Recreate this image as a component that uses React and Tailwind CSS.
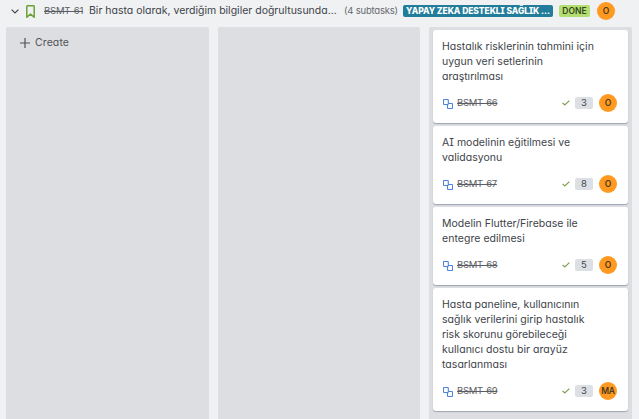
const cards = [
  { id: 'BSMT-66', points: 3, who: 'O', lines: [['Hastalık risklerinin tahmini için', 'tracking-[0.02px]'], ['uygun veri setlerinin', 'tracking-[0.02px]'], ['araştırılması', 'tracking-[0px]']] },
  { id: 'BSMT-67', points: 8, who: 'O', lines: [['AI modelinin eğitilmesi ve', 'tracking-[0.02px]'], ['validasyonu', 'tracking-[0.02px]']] },
  { id: 'BSMT-68', points: 5, who: 'O', lines: [['Modelin Flutter/Firebase ile', 'tracking-[0.03px]'], ['entegre edilmesi', 'tracking-[0.04px]']] },
  { id: 'BSMT-69', points: 3, who: 'MA', lines: [['Hasta paneline, kullanıcının', 'tracking-[0.02px]'], ['sağlık verilerini girip hastalık', 'tracking-[0.03px]'], ['risk skorunu görebileceği', 'tracking-[-0.02px]'], ['kullanıcı dostu bir arayüz', 'tracking-[0.03px]'], ['tasarlanması', 'tracking-[0.03px]']] },
];

function Avatar({ children }) {
  return (
    <span className="flex size-[18px] shrink-0 items-center justify-center rounded-full bg-[#ff991f] text-[8.5px] font-semibold leading-none tracking-[-0.2px] text-[#4a3a22]">
      {children}
    </span>
  );
}

function Card({ card }) {
  return (
    <article className="rounded-[3px] bg-white px-[9px] pt-[9px] pb-[11px] shadow-[0_1px_1px_rgba(9,30,66,0.3)]">
      <p className="text-[10.5px] leading-[15px] text-[#404349]">
        {card.lines.map(([text, tracking]) => (
          <span key={text} className="block whitespace-nowrap">
            <span className={tracking}>{text}</span>
          </span>
        ))}
      </p>
      <div className="mt-[10px] flex h-[18px] items-center">
        <svg className="mt-[2px] ml-px size-[10px] shrink-0" viewBox="0 0 10 10" fill="none" stroke="#4c83dd" strokeWidth="1.1">
          <rect x="0.5" y="0.5" width="4.8" height="5" rx="0.7" />
          <path d="M5.300 4.500h3.500q.7 0 .7.7v3.600q0 .7-.7.7H5.200q-.7 0-.7-.7V5.500" />
        </svg>
        <span className="ml-[4px] text-[9.5px] tracking-[-0.3px] text-[#5b5e64] line-through">{card.id}</span>
        <svg className="ml-auto h-[6px] w-2 shrink-0" viewBox="0 0 8 6" fill="none" stroke="#7f9f50" strokeWidth="1.2">
          <path d="M.6 2.8 2.8 5 7.4.6" />
        </svg>
        <span className="ml-[5px] mr-[6px] flex h-3 w-[18px] items-center justify-center rounded-[2px] bg-[#dcdfe4] text-[9.5px] leading-none text-[#44474d]">
          {card.points}
        </span>
        <span className="mr-[2px]"><Avatar>{card.who}</Avatar></span>
      </div>
    </article>
  );
}

export default function App() {
  return (
    <main className="flex h-[419px] w-[639px] flex-col overflow-hidden bg-[#f0f1f3] font-['Inter','Noto_Sans',sans-serif] text-[#404349] [font-feature-settings:'cv11','cv08']">
      <header className="flex h-[27px] shrink-0 items-center whitespace-nowrap pb-[5px] pl-[11px]">
        <svg className="h-[5px] w-2 shrink-0" viewBox="0 0 8 5" fill="none" stroke="#44474d" strokeWidth="1.2">
          <path d="M.6.6 4 4 7.4.6" />
        </svg>
        <svg className="ml-[7px] h-[13px] w-[9px] shrink-0" viewBox="0 0 9 13" fill="none" stroke="#69a036" strokeWidth="1.5" strokeLinejoin="round">
          <path d="M.8 1.5q0-.7.7-.7h6q.7 0 .7.7v10.700L4.5 9.100.8 12.200z" />
        </svg>
        <span className="ml-[9px] w-[45px] shrink-0 text-[9.5px] text-[#5b5e64]"><span className="tracking-[-0.2px] line-through">BSMT-61</span></span>
        <span className="w-[255px] shrink-0 text-[10.5px]"><span className="tracking-[0px]">Bir hasta olarak, verdiğim bilgiler doğrultusunda...</span></span>
        <span className="w-[59px] shrink-0 text-[9.5px] text-[#66696f]"><span className="tracking-[-0.2px]">(4 subtasks)</span></span>
        <span className="flex h-3 w-[150px] shrink-0 items-center justify-center rounded-[2px] bg-[#227d9b] pt-px text-[8.5px] leading-none font-extrabold text-white"><span className="tracking-[-0.07px]">YAPAY ZEKA DESTEKLI SAĞLIK ...</span></span>
        <span className="ml-[6px] flex h-3 w-[31px] shrink-0 items-center justify-center rounded-[2px] bg-[#b3df72] pt-px text-[8.5px] leading-none font-semibold text-[#37471f]">DONE</span>
        <span className="ml-[7px]"><Avatar>O</Avatar></span>
      </header>
      <div className="grid min-h-0 flex-1 grid-cols-[203px_202px_203px] gap-[9px] pl-[6px]">
        <section className="rounded-t-[2px] bg-[#dddee1] pt-[8px] pl-[14px]">
          <button className="flex h-[15px] items-center text-[10.5px] text-[#505258]">
            <svg className="size-[10px]" viewBox="0 0 10 10" fill="none" stroke="#505258" strokeWidth="1.2">
              <path d="M5 0v10M0 5h10" />
            </svg>
            <span className="ml-[5px] tracking-[0.1px]">Create</span>
          </button>
        </section>
        <section className="rounded-t-[2px] bg-[#dddee1]" />
        <section className="flex flex-col gap-[3px] rounded-t-[2px] bg-[#dddee1] px-1 pt-[3px]">
          {cards.map((card) => <Card key={card.id} card={card} />)}
        </section>
      </div>
    </main>
  );
}
